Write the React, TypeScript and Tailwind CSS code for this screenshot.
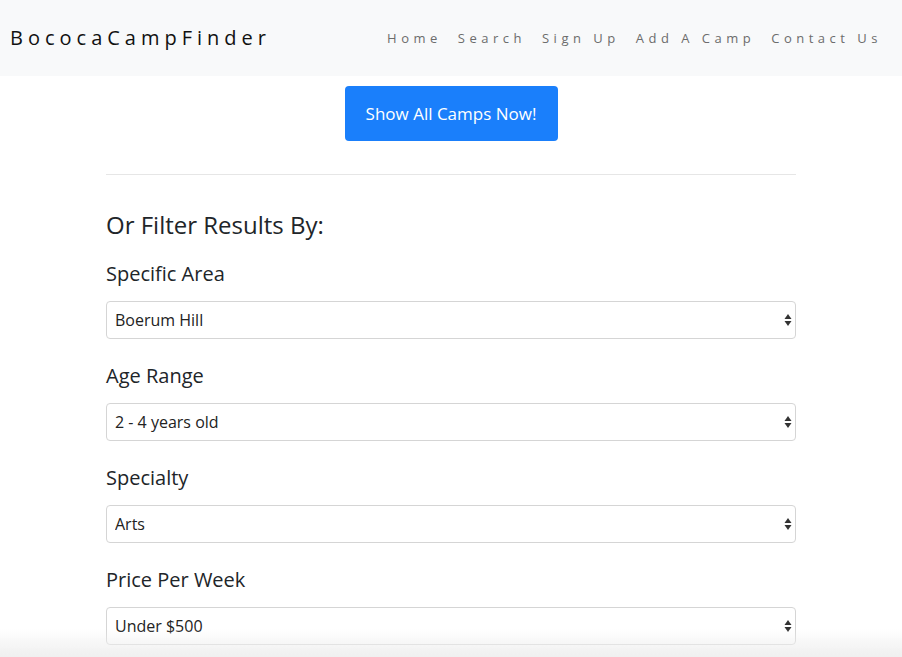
import React from "react";

const NAV = ["Home", "Search", "Sign Up", "Add A Camp", "Contact Us"];

const FILTERS = [
  { label: "Specific Area", value: "Boerum Hill" },
  { label: "Age Range", value: "2 - 4 years old" },
  { label: "Specialty", value: "Arts" },
  { label: "Price Per Week", value: "Under $500" },
];

function Arrows() {
  return (
    <svg className="pointer-events-none absolute right-[4px] top-1/2 -translate-y-1/2" width="8" height="14" viewBox="0 0 8 14">
      <path d="M4 1 L7.5 6 L0.5 6 Z" fill="#333" />
      <path d="M4 13 L7.5 8 L0.5 8 Z" fill="#333" />
    </svg>
  );
}

export default function App() {
  return (
    <div className="min-h-[657px] bg-white font-['Open_Sans',sans-serif] text-[#212529]">
      <nav className="flex h-[76px] items-center justify-between bg-[#f8f9fa] pl-[10px] pr-[12px]">
        <span className="text-[20px] tracking-[5px] text-[#111]">BococaCampFinder</span>
        <ul className="flex items-center pt-[2px]">
          {NAV.map((n) => (
            <li key={n} className="px-2 text-[13px] tracking-[4.5px] text-[#6c6c6c]">
              {n}
            </li>
          ))}
        </ul>
      </nav>

      <div className="mx-auto w-[690px]">
        <div className="mt-[10px] flex justify-center">
          <button className="h-[55px] w-[213px] rounded-[4px] bg-[#1a7ffb] text-[17px] font-medium text-white">Show All Camps Now!</button>
        </div>
        <hr className="mt-[33px] border-t border-[#e6e6e6]" />
        <h2 className="mt-[35px] text-[24px] leading-[29px]">Or Filter Results By:</h2>
        <div className="mt-[23px] flex flex-col gap-[25px]">
          {FILTERS.map((f) => (
            <div key={f.label}>
              <label className="block text-[20px] leading-[24px]">{f.label}</label>
              <div className="relative mt-[15px]">
                <select
                  defaultValue={f.value}
                  className="h-[38px] w-full appearance-none rounded-[4px] border border-[#d5d5d5] bg-white pl-[8px] text-[16px] text-[#222]"
                >
                  <option>{f.value}</option>
                </select>
                <Arrows />
              </div>
            </div>
          ))}
        </div>
      </div>
      <div className="pointer-events-none fixed inset-x-0 bottom-0 h-[28px] bg-gradient-to-b from-transparent to-[#efefef]" />
    </div>
  );
}
